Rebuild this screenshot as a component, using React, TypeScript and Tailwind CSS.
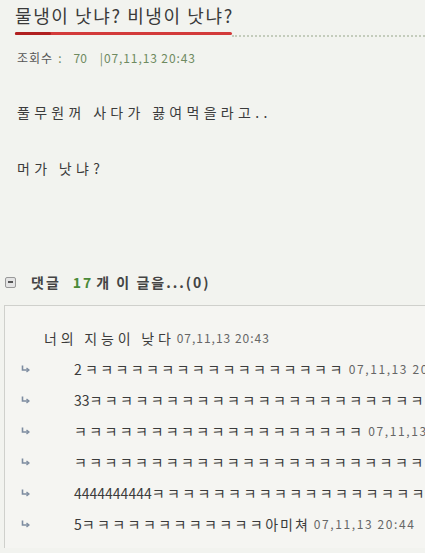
import React from "react";

interface Reply {
  lead?: string;
  count: number;
  tail?: string;
  date?: string;
}

const replies: Reply[] = [
  { lead: "2 ", count: 17, date: "07,11,13 20:43" },
  { lead: "33", count: 24 },
  { count: 19, date: "07,11,13 20:43" },
  { count: 24 },
  { lead: "4444444444", count: 18 },
  { lead: "5", count: 12, tail: "아미쳐", date: "07,11,13 20:44" },
];

const ReplyArrow: React.FC = () => (
  <svg width="9" height="8" viewBox="0 0 9 8" className="shrink-0">
    <path d="M1.5 0.5 V5 H7" fill="none" stroke="#7d8ca0" strokeWidth="1.6" />
    <path d="M5.5 3 L8 5 L5.5 7" fill="none" stroke="#7d8ca0" strokeWidth="1.4" />
  </svg>
);

export default function App() {
  return (
    <div className="w-[425px] h-[553px] overflow-hidden bg-[#f2f3ef] text-[#3b3b3b] font-['Noto_Sans_CJK_KR','Noto_Sans',sans-serif]">
      <div className="pt-[4px]">
        <h1 className="px-[15px] text-[18px] leading-[22px] text-[#3a3a3a] tracking-[1.6px]">
          물냉이 낫냐? 비냉이 낫냐?
        </h1>
        <div className="flex items-end mt-[6px]">
          <div className="w-[15px]" />
          <div className="w-[217px] h-[3px] bg-[#d33a3a] rounded-full flex">
            <div className="w-[36px] h-[3px] bg-[#b02020] rounded-full" />
          </div>
          <div className="flex-1 border-b-2 border-dotted border-[#c4ccbc] mb-[-2px]" />
        </div>
        <div className="pl-[17px] mt-[16px] leading-[14px] flex items-center">
          <span className="text-[12px] tracking-[1px] text-[#555]">조회수</span>
          <span className="text-[12px] text-[#6e8a60] ml-[5px]">:</span>
          <span className="text-[12px] text-[#6e8a60] ml-[12px]">70</span>
          <span className="text-[12px] text-[#6e8a60] ml-[13px] tracking-[0.9px]">|07,11,13 20:43</span>
        </div>
      </div>

      <div className="pl-[17px] mt-[38px] text-[14px] leading-[18px] tracking-[4.3px]">
        <p>풀무원꺼 사다가 끓여먹을라고..</p>
        <p className="mt-[38px]">머가 낫냐?</p>
      </div>

      <div className="flex items-center mt-[97px] pl-[5px] text-[14px] leading-[16px] font-bold tracking-[2px] text-[#444]">
        <span className="w-[11px] h-[11px] border border-[#999] bg-[#e4e4e4] rounded-[2px] flex items-center justify-center mr-[15px]">
          <span className="w-[5px] h-[2px] bg-[#555]" />
        </span>
        <span>댓글</span>
        <span className="text-[#4a8a38] ml-[12px]">17</span>
        <span className="ml-[3px]">개 이 글을...(0)</span>
      </div>

      <div className="ml-[4px] mt-[15px] border-l border-t border-[#cfd0cc] bg-[#f5f5f2] h-[243px] pt-[23px]">
        <div className="pl-[39px] flex items-center leading-[18px]">
          <span className="text-[14px] tracking-[3.8px]">너의 지능이 낮다</span>
          <span className="ml-[2px] text-[12px] tracking-[1px] text-[#666]">07,11,13 20:43</span>
        </div>
        <div className="mt-[13px] flex flex-col gap-[13px]">
          {replies.map((r, i) => (
            <div key={i} className="flex items-center whitespace-nowrap pl-[16px] leading-[18px]">
              <ReplyArrow />
              <span className="ml-[44px] text-[14px]">
                {r.lead && <span>{r.lead}</span>}
                <span className="tracking-[2.4px]">{"ㅋ".repeat(r.count)}</span>
                {r.tail && <span className="tracking-[2px]">{r.tail}</span>}
              </span>
              {r.date && (
                <span className="ml-[4px] text-[12px] tracking-[1.6px] text-[#666]">{r.date}</span>
              )}
            </div>
          ))}
        </div>
      </div>
    </div>
  );
}
